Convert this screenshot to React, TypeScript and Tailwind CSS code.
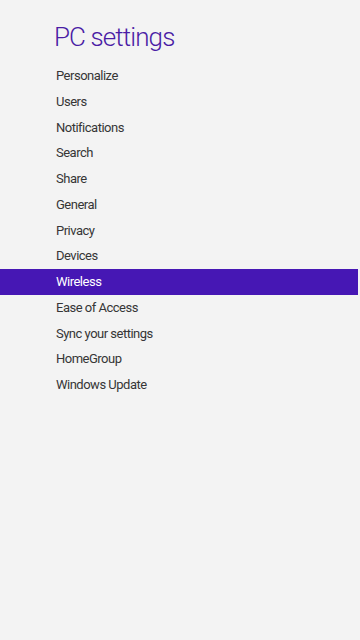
const items = [
  "Personalize",
  "Users",
  "Notifications",
  "Search",
  "Share",
  "General",
  "Privacy",
  "Devices",
  "Wireless",
  "Ease of Access",
  "Sync your settings",
  "HomeGroup",
  "Windows Update",
];

export default function App() {
  const selected = "Wireless";

  return (
    <div className="w-[360px] h-[640px] bg-[#f3f3f3] overflow-hidden font-['Roboto',sans-serif]">
      {/* Title */}
      <h1 className="pl-[54px] pt-[19px] text-[26px] leading-[36px] font-light tracking-[-0.9px] text-[#4a1ca5]">
        PC settings
      </h1>

      {/* Menu */}
      <ul className="mt-[8px] pr-[2px]">
        {items.map((item) => (
          <li
            key={item}
            className={`h-[25.75px] pl-[56px] flex items-center text-[13px] tracking-[-0.5px] ${
              item === selected ? "bg-[#4617b4] text-white" : "text-[#363636]"
            }`}
          >
            {item}
          </li>
        ))}
      </ul>
    </div>
  );
}
